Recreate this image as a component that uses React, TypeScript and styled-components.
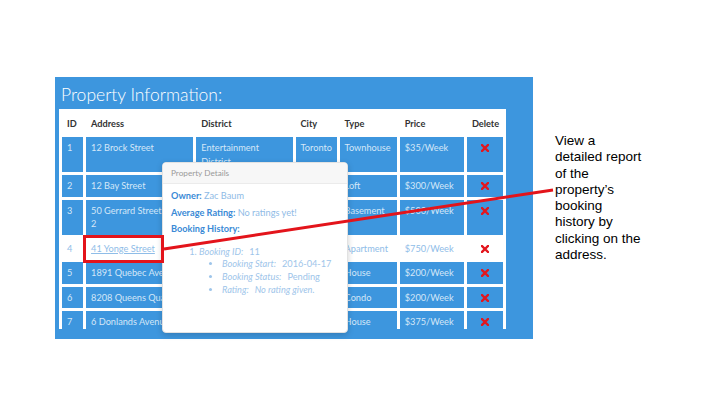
import React from "react";
import styled, { createGlobalStyle } from "styled-components";

const Global = createGlobalStyle`
  html, body { margin: 0; padding: 0; background: #ffffff; }
  body { width: 720px; height: 405px; overflow: hidden; font-family: Lato, "Open Sans", sans-serif; }
`;

const BLUE = "#3d96de";

const Page = styled.div`
  position: relative;
  width: 720px;
  height: 405px;
  box-sizing: border-box;
  padding: 77px 0 0 55px;
  display: flex;
  align-items: flex-start;
  gap: 22px;
`;

const Panel = styled.section`
  width: 478px;
  height: 262px;
  box-sizing: border-box;
  background: ${BLUE};
  padding: 0 27px 0 4px;
  display: flex;
  flex-direction: column;
`;

const Title = styled.h1`
  margin: 0;
  height: 32px;
  padding-left: 2px;
  font-family: Lato, sans-serif;
  font-weight: 300;
  font-size: 17.5px;
  line-height: 36px;
  color: #ffffff;
  white-space: nowrap;
`;

const TableWrap = styled.div`
  height: 220px;
  overflow: hidden;
  background: #ffffff;
`;

const Table = styled.table`
  border-collapse: separate;
  border-spacing: 3px;
  table-layout: fixed;
  width: 447px;
  font-family: Lato, sans-serif;
  font-size: 9.2px;
`;

const Th = styled.th<{ $center?: boolean }>`
  font-weight: 700;
  color: #333333;
  font-size: 9.2px;
  height: 22px;
  padding: 0 5px;
  box-sizing: border-box;
  text-align: ${(p) => (p.$center ? "center" : "left")};
`;

const Td = styled.td<{ $active?: boolean; $center?: boolean }>`
  background: ${(p) => (p.$active ? "transparent" : BLUE)};
  color: ${(p) => (p.$active ? "#8fbde8" : "#d4e7f8")};
  padding: 4px 5px;
  line-height: 13.5px;
  vertical-align: top;
  text-align: ${(p) => (p.$center ? "center" : "left")};
  white-space: nowrap;
  overflow: hidden;
`;

const AddressLink = styled.a`
  color: #8fbde8;
  text-decoration: underline;
`;

const DeleteIcon = styled.svg`
  width: 8px;
  height: 8px;
  vertical-align: -1px;
`;

const Popover = styled.div`
  position: absolute;
  left: 162px;
  top: 162px;
  width: 186px;
  height: 171px;
  box-sizing: border-box;
  background: #ffffff;
  border: 1px solid #e2e2e2;
  border-radius: 4px;
  box-shadow: 0 2px 6px rgba(0, 0, 0, 0.18);
  overflow: hidden;
  font-family: Lato, sans-serif;
`;

const PopHeader = styled.div`
  height: 21px;
  box-sizing: border-box;
  background: #f7f7f7;
  border-bottom: 1px solid #ebebeb;
  padding: 0 8px;
  font-size: 8.2px;
  line-height: 20px;
  color: #9a9a9a;
`;

const PopBody = styled.div`
  padding: 4px 8px;
`;

const InfoLine = styled.div`
  font-size: 9.2px;
  line-height: 16.5px;
  color: #8fbbe6;
  white-space: nowrap;
`;

const Label = styled.b`
  color: #3a8ad6;
  font-weight: 700;
`;

const History = styled.ol`
  margin: 8px 0 0 0;
  padding-left: 28px;
  font-size: 9.2px;
  line-height: 12.7px;
  color: #9ec5ea;
`;

const SubList = styled.ul`
  margin: 0;
  padding-left: 23px;
  list-style: disc;
`;

const Item = styled.li`
  white-space: nowrap;
`;

const Em = styled.i`
  font-style: italic;
`;

const Val = styled.span<{ $italic?: boolean }>`
  margin-left: 6px;
  font-style: ${(p) => (p.$italic ? "italic" : "normal")};
`;

const Overlay = styled.svg`
  position: absolute;
  left: 0;
  top: 0;
  width: 720px;
  height: 405px;
  pointer-events: none;
`;

const Note = styled.p`
  margin: 56px 0 0 0;
  font-family: "Liberation Sans", Arial, sans-serif;
  font-size: 13.5px;
  line-height: 16.3px;
  color: #000000;
`;

type Row = {
  id: number;
  address: React.ReactNode;
  district: React.ReactNode;
  city: string;
  type: string;
  price: string;
  active?: boolean;
};

const rows: Row[] = [
  { id: 1, address: "12 Brock Street", district: <>Entertainment<br />District</>, city: "Toronto", type: "Townhouse", price: "$35/Week" },
  { id: 2, address: "12 Bay Street", district: "", city: "", type: "Loft", price: "$300/Week" },
  { id: 3, address: <>50 Gerrard Street<br />2</>, district: "", city: "", type: "Basement", price: "$500/Week" },
  { id: 4, address: <AddressLink>41 Yonge Street</AddressLink>, district: "", city: "", type: "Apartment", price: "$750/Week", active: true },
  { id: 5, address: "1891 Quebec Avenue", district: "", city: "", type: "House", price: "$200/Week" },
  { id: 6, address: "8208 Queens Quay", district: "", city: "", type: "Condo", price: "$200/Week" },
  { id: 7, address: "6 Donlands Avenue", district: "", city: "", type: "House", price: "$375/Week" },
];

const XMark = () => (
  <DeleteIcon viewBox="0 0 8 8">
    <path d="M1 1 L7 7 M7 1 L1 7" stroke="#e3161d" strokeWidth="2.4" strokeLinecap="square" />
  </DeleteIcon>
);

export default function App() {
  return (
    <>
      <Global />
      <Page>
        <Panel>
          <Title>Property Information:</Title>
          <TableWrap>
            <Table>
              <colgroup>
                <col style={{ width: 21 }} />
                <col style={{ width: 107 }} />
                <col style={{ width: 96 }} />
                <col style={{ width: 41 }} />
                <col style={{ width: 57 }} />
                <col style={{ width: 64 }} />
                <col style={{ width: 36 }} />
              </colgroup>
              <thead>
                <tr>
                  <Th>ID</Th>
                  <Th>Address</Th>
                  <Th>District</Th>
                  <Th>City</Th>
                  <Th>Type</Th>
                  <Th>Price</Th>
                  <Th $center>Delete</Th>
                </tr>
              </thead>
              <tbody>
                {rows.map((r) => (
                  <tr key={r.id}>
                    <Td $active={r.active}>{r.id}</Td>
                    <Td $active={r.active}>{r.address}</Td>
                    <Td $active={r.active}>{r.district}</Td>
                    <Td $active={r.active}>{r.city}</Td>
                    <Td $active={r.active}>{r.type}</Td>
                    <Td $active={r.active}>{r.price}</Td>
                    <Td $active={r.active} $center>
                      <XMark />
                    </Td>
                  </tr>
                ))}
              </tbody>
            </Table>
          </TableWrap>
        </Panel>
        <Note>
          View a<br />
          detailed report<br />
          of the<br />
          property’s<br />
          booking<br />
          history by<br />
          clicking on the<br />
          address.
        </Note>
        <Popover>
          <PopHeader>Property Details</PopHeader>
          <PopBody>
            <InfoLine>
              <Label>Owner:</Label> Zac Baum
            </InfoLine>
            <InfoLine>
              <Label>Average Rating:</Label> No ratings yet!
            </InfoLine>
            <InfoLine>
              <Label>Booking History:</Label>
            </InfoLine>
            <History>
              <Item>
                <Em>Booking ID:</Em>
                <Val>11</Val>
                <SubList>
                  <Item>
                    <Em>Booking Start:</Em>
                    <Val>2016-04-17</Val>
                  </Item>
                  <Item>
                    <Em>Booking Status:</Em>
                    <Val>Pending</Val>
                  </Item>
                  <Item>
                    <Em>Rating:</Em>
                    <Val $italic>No rating given.</Val>
                  </Item>
                </SubList>
              </Item>
            </History>
          </PopBody>
        </Popover>
        <Overlay viewBox="0 0 720 405">
          <rect x="84.5" y="236.5" width="78" height="25" fill="none" stroke="#e3141b" strokeWidth="3" />
          <line x1="164" y1="249" x2="553" y2="190" stroke="#e3141b" strokeWidth="3" />
        </Overlay>
      </Page>
    </>
  );
}
